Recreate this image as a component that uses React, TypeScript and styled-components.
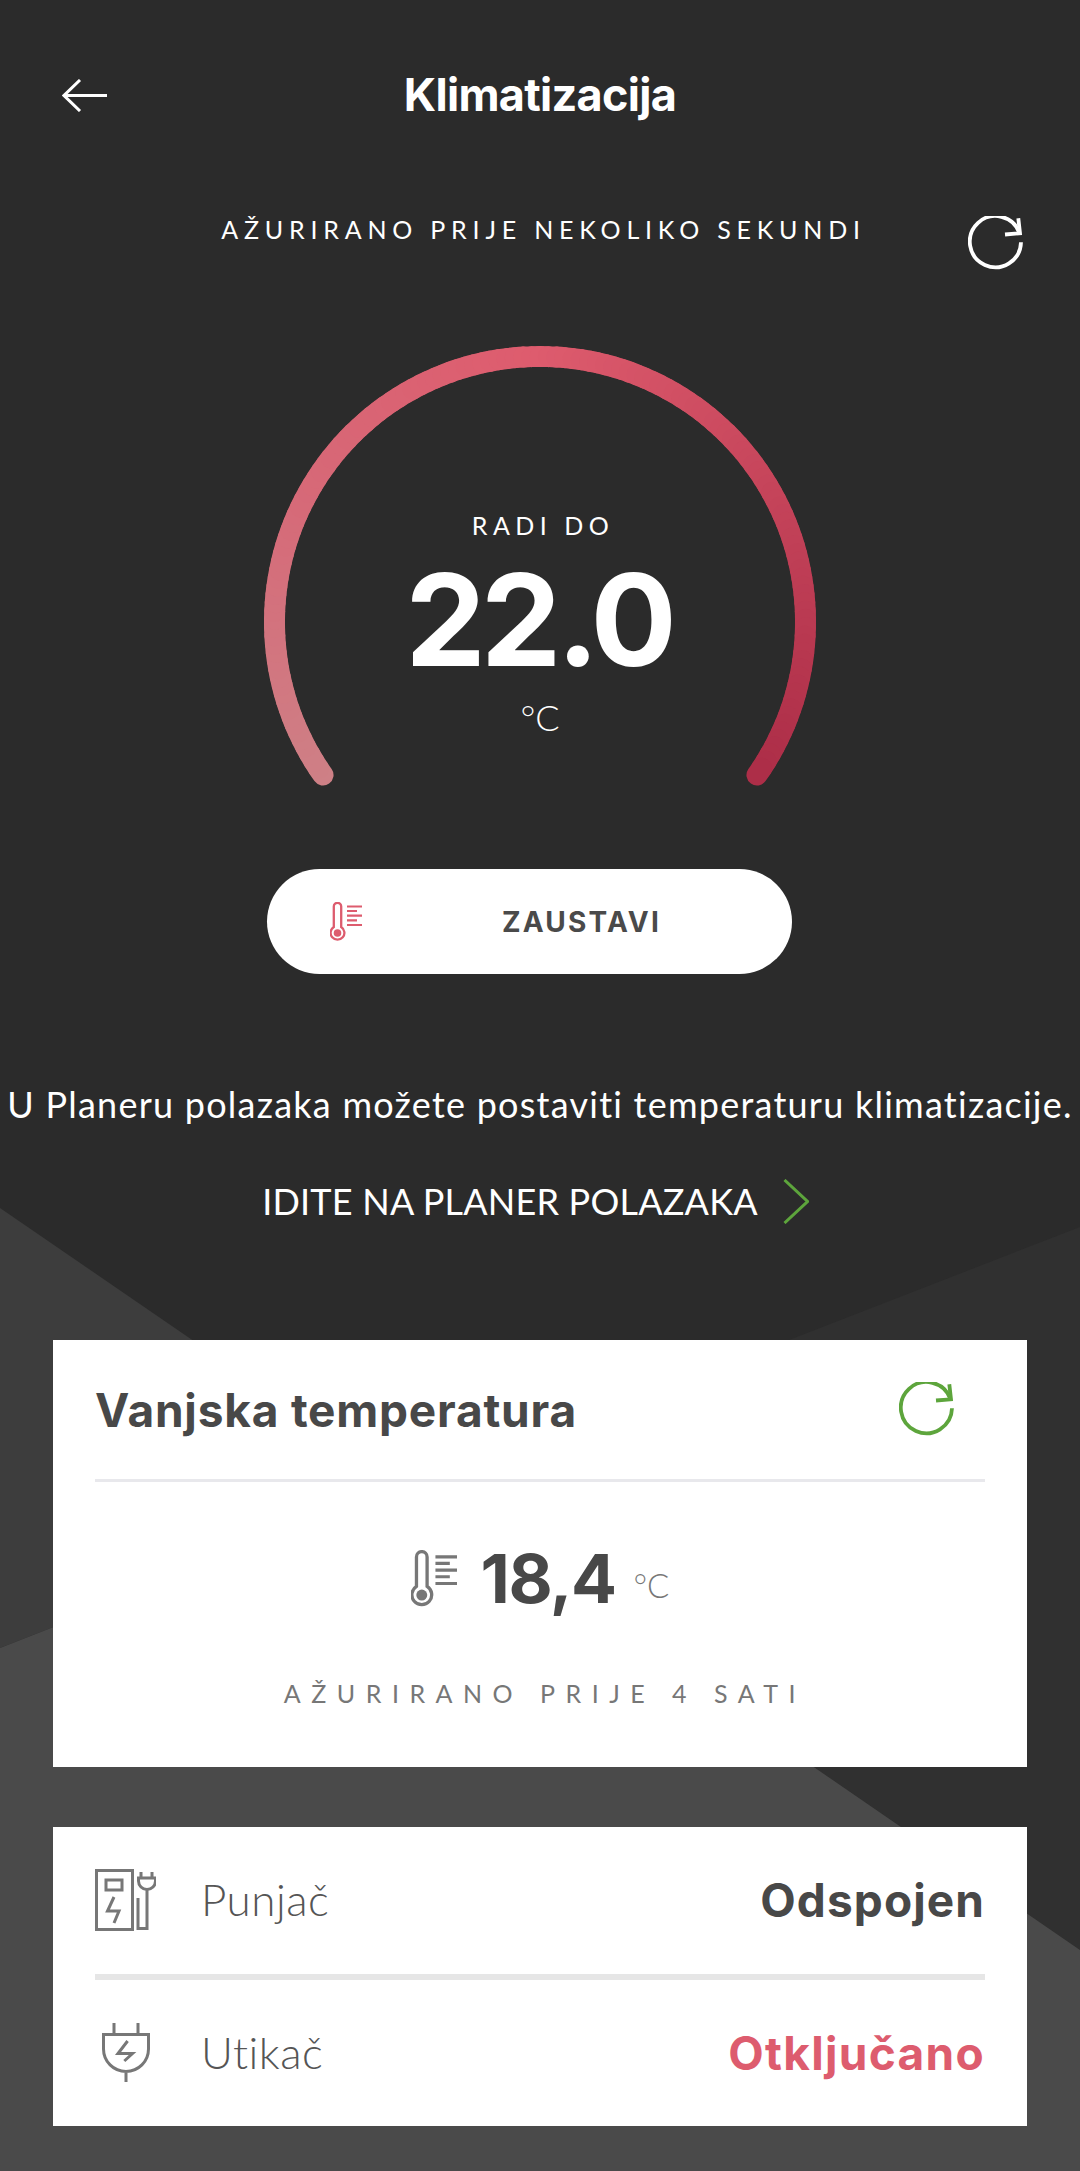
import React from "react";
import styled, { createGlobalStyle } from "styled-components";

const Global = createGlobalStyle`
  html, body { margin: 0; padding: 0; background: #2b2b2b; }
  * { box-sizing: border-box; }
`;

const SANS = `"Lato", "Liberation Sans", sans-serif`;
const BOLD = `"Inter", "Liberation Sans", sans-serif`;

const Page = styled.div`
  position: relative;
  width: 1080px;
  height: 2171px;
  overflow: hidden;
  background: #2b2b2b;
  display: flex;
  flex-direction: column;
  font-family: ${SANS};
  color: #fff;
`;
const Backdrop = styled.svg`
  position: absolute;
  inset: 0;
  width: 1080px;
  height: 2171px;
`;
const Content = styled.div`
  position: relative;
  display: flex;
  flex-direction: column;
`;
const Header = styled.header`
  height: 190px;
  display: grid;
  grid-template-columns: 1fr auto 1fr;
  align-items: center;
  padding: 0 62px;
`;
const Title = styled.h1`
  margin: 0;
  font-family: ${BOLD};
  font-size: 45px;
  line-height: 50px;
  font-weight: 700;
  letter-spacing: -0.7px;
`;
const StatusRow = styled.div`
  height: 140px;
  display: grid;
  grid-template-columns: 1fr auto 1fr;
  align-items: start;
`;
const StatusText = styled.div`
  margin: 24px 0 0 7px;
  font-size: 25px;
  line-height: 30px;
  letter-spacing: 5.8px;
  white-space: nowrap;
`;
const StatusIcon = styled.div`
  margin-top: 26px;
  padding-right: 57px;
  justify-self: end;
  display: flex;
`;
const Gauge = styled.div`
  width: 600px;
  height: 480px;
  margin: 0 auto;
  display: grid;
  & > * { grid-area: 1 / 1; }
`;
const GaugeText = styled.div`
  display: flex;
  flex-direction: column;
  align-items: center;
  padding-top: 180px;
`;
const GaugeLabel = styled.div`
  padding-left: 6px;
  font-size: 25px;
  line-height: 30px;
  letter-spacing: 5.5px;
`;
const GaugeValue = styled.div`
  margin-top: 10px;
  padding-right: 3px;
  font-family: ${BOLD};
  font-size: 128px;
  line-height: 140px;
  font-weight: 700;
  letter-spacing: -5px;
`;
const GaugeUnit = styled.div`
  margin-top: 7px;
  font-size: 36px;
  line-height: 40px;
  font-weight: 300;
`;
const StopButton = styled.button`
  width: 525px;
  height: 105px;
  margin: 59px 0 0 267px;
  padding: 0 0 0 63px;
  border: 0;
  border-radius: 53px;
  background: #fff;
  display: flex;
  align-items: center;
  gap: 140px;
  color: #4a4a4a;
  font-family: ${BOLD};
  font-size: 28px;
  font-weight: 700;
  letter-spacing: 2.2px;
`;
const Note = styled.p`
  margin: 109px 0 0;
  text-align: center;
  font-size: 36px;
  line-height: 42px;
  letter-spacing: 1.24px;
  white-space: nowrap;
`;
const LinkRow = styled.div`
  margin-top: 53px;
  padding-right: 9px;
  height: 46px;
  display: flex;
  align-items: center;
  justify-content: center;
  gap: 25px;
  font-size: 36px;
  letter-spacing: 0.2px;
`;
const Card = styled.section<{ $top: number; $height: number }>`
  margin: ${(p) => p.$top}px 53px 0;
  height: ${(p) => p.$height}px;
  background: #fff;
  color: #484848;
`;
const CardHeader = styled.div`
  margin: 0 42px;
  height: 142px;
  border-bottom: 3px solid #e8e8ec;
  display: flex;
  align-items: center;
  justify-content: space-between;
  padding-right: 31px;
`;
const CardTitle = styled.h2`
  margin: 0;
  font-family: ${BOLD};
  font-size: 46px;
  font-weight: 700;
  letter-spacing: 0.8px;
`;
const TempRow = styled.div`
  margin-top: 66px;
  display: flex;
  justify-content: center;
  align-items: center;
  height: 60px;
`;
const TempValue = styled.div`
  margin-left: 24px;
  font-family: ${BOLD};
  font-size: 68px;
  font-weight: 700;
  letter-spacing: -1.5px;
  line-height: 60px;
`;
const TempUnit = styled.div`
  margin: 14px 0 0 18px;
  font-size: 33px;
  font-weight: 300;
  color: #777;
`;
const Updated = styled.div`
  margin-top: 70px;
  padding-left: 10px;
  text-align: center;
  font-size: 25px;
  line-height: 30px;
  letter-spacing: 10.5px;
  color: #777;
`;
const InfoRow = styled.div`
  margin: 0 42px;
  height: 146.5px;
  display: flex;
  align-items: center;
`;
const RowDivider = styled.div`
  margin: 0 42px;
  height: 6px;
  background: #e6e6e6;
`;
const IconSlot = styled.div`
  width: 106px;
  flex: none;
`;
const IconBox = styled.div`
  width: 61px;
  display: flex;
  justify-content: center;
`;
const RowLabel = styled.div`
  flex: 1;
  font-size: 44px;
  font-weight: 300;
  letter-spacing: 0.5px;
  color: #555;
  margin-top: -2px;
`;
const RowValue = styled.div<{ $alert?: boolean }>`
  font-family: ${BOLD};
  font-size: 46px;
  font-weight: 700;
  letter-spacing: ${(p) => (p.$alert ? "1.3px" : "1.1px")};
  color: ${(p) => (p.$alert ? "#dd5c6e" : "#484848")};
`;

const STOPS: [number, number, number, number][] = [
  [0, 206, 128, 134],
  [0.25, 214, 106, 120],
  [0.5, 222, 92, 110],
  [0.75, 197, 68, 90],
  [1, 173, 46, 72],
];
function colorAt(t: number) {
  let i = 0;
  while (i < STOPS.length - 2 && t > STOPS[i + 1][0]) i++;
  const a = STOPS[i];
  const b = STOPS[i + 1];
  const k = (t - a[0]) / (b[0] - a[0]);
  const c = [1, 2, 3].map((n) => Math.round(a[n] + (b[n] - a[n]) * k));
  return `rgb(${c[0]},${c[1]},${c[2]})`;
}
const CX = 300;
const CY = 292;
const R = 265.5;
const START = 180 - 35.2;
const SWEEP = 250.4;
const STEPS = 140;
const segments = Array.from({ length: STEPS }, (_, i) => {
  const a0 = ((START + (SWEEP * i) / STEPS) * Math.PI) / 180;
  const a1 = ((START + (SWEEP * (i + 1)) / STEPS) * Math.PI) / 180;
  return {
    d: `M${CX + R * Math.cos(a0)} ${CY + R * Math.sin(a0)}A${R} ${R} 0 0 1 ${CX + R * Math.cos(a1)} ${CY + R * Math.sin(a1)}`,
    color: colorAt((i + 0.5) / STEPS),
  };
});

const Thermometer = ({ color, width, height }: { color: string; width: number; height: number }) => (
  <svg width={width} height={height} viewBox="0 0 32 39" fill="none" stroke={color} strokeWidth="2.3">
    <path d="M3.8 25V4.5a3.7 3.7 0 0 1 7.4 0V25a6.9 6.9 0 1 1-7.4 0Z" />
    <circle cx="7.5" cy="31" r="3.8" fill={color} stroke="none" />
    <path d="M17 4.5h15M17 9h10M17 13.7h15M17 18.3h10M17 23h15" strokeWidth="2.2" />
  </svg>
);
const Refresh = ({ color }: { color: string }) => (
  <svg width="55" height="55" viewBox="0 0 55 55" fill="none" stroke={color} strokeWidth="3.8">
    <path d="M51.5 17A25.6 25.6 0 1 0 53 26.3" />
    <path d="M50.3 2.3 52 17.3 37 18.5" />
  </svg>
);

export default function App() {
  return (
    <Page>
      <Global />
      <Backdrop viewBox="0 0 1080 2171">
        <polygon points="0,1208 408,1488 0,1648" fill="#3d3d3d" />
        <polygon points="1080,1227 408,1488 1080,1950" fill="#303030" />
        <polygon points="0,1648 408,1488 1080,1950 1080,2171 0,2171" fill="#4a4a4a" />
      </Backdrop>
      <Content>
        <Header>
          <svg width="45" height="33" viewBox="0 0 45 33" fill="none" stroke="#fff" strokeWidth="3">
            <path d="M45 16.5H3M18 1 2 16.5 18 32" />
          </svg>
          <Title>Klimatizacija</Title>
        </Header>
        <StatusRow>
          <span />
          <StatusText>AŽURIRANO PRIJE NEKOLIKO SEKUNDI</StatusText>
          <StatusIcon>
            <Refresh color="#fff" />
          </StatusIcon>
        </StatusRow>
        <Gauge>
          <svg width="600" height="480" viewBox="0 0 600 480" fill="none" strokeWidth="21" strokeLinecap="round">
            {segments.map((s, i) => (
              <path key={i} d={s.d} stroke={s.color} />
            ))}
          </svg>
          <GaugeText>
            <GaugeLabel>RADI DO</GaugeLabel>
            <GaugeValue>22.0</GaugeValue>
            <GaugeUnit>°C</GaugeUnit>
          </GaugeText>
        </Gauge>
        <StopButton>
          <Thermometer color="#dd5c6e" width={32} height={39} />
          ZAUSTAVI
        </StopButton>
        <Note>U Planeru polazaka možete postaviti temperaturu klimatizacije.</Note>
        <LinkRow>
          IDITE NA PLANER POLAZAKA
          <svg width="26" height="45" viewBox="0 0 26 45" fill="none" stroke="#5da53c" strokeWidth="3">
            <path d="M1.5 1 24.5 22.5 1.5 44" />
          </svg>
        </LinkRow>
        <Card $top={116} $height={427}>
          <CardHeader>
            <CardTitle>Vanjska temperatura</CardTitle>
            <Refresh color="#5da53c" />
          </CardHeader>
          <TempRow>
            <Thermometer color="#777" width={46} height={57} />
            <TempValue>18,4</TempValue>
            <TempUnit>°C</TempUnit>
          </TempRow>
          <Updated>AŽURIRANO PRIJE 4 SATI</Updated>
        </Card>
        <Card $top={60} $height={299}>
          <InfoRow>
            <IconSlot>
              <IconBox>
                <svg width="61" height="62" viewBox="0 0 61 62" fill="none" stroke="#777" strokeWidth="3">
                  <rect x="1.5" y="1.5" width="36" height="59" />
                  <rect x="11" y="11" width="16" height="10" />
                  <path d="M19 28 12.5 42H24L19 54" />
                  <path d="M46 3v6M57 3v6M43.5 9h17v3a8.5 8.5 0 0 1-17 0ZM52 20v39.5h-9V29" />
                </svg>
              </IconBox>
            </IconSlot>
            <RowLabel>Punjač</RowLabel>
            <RowValue>Odspojen</RowValue>
          </InfoRow>
          <RowDivider />
          <InfoRow>
            <IconSlot>
              <IconBox>
                <svg width="48" height="59" viewBox="0 0 48 59" fill="none" stroke="#777" strokeWidth="3">
                  <path d="M12 0v11M36 0v11M1.5 11.5h45V26a22.5 22.5 0 0 1-45 0ZM24 49v10" />
                  <path d="M25.6 18 16 30.5H30.5L22.3 38" />
                </svg>
              </IconBox>
            </IconSlot>
            <RowLabel>Utikač</RowLabel>
            <RowValue $alert>Otključano</RowValue>
          </InfoRow>
        </Card>
      </Content>
    </Page>
  );
}
